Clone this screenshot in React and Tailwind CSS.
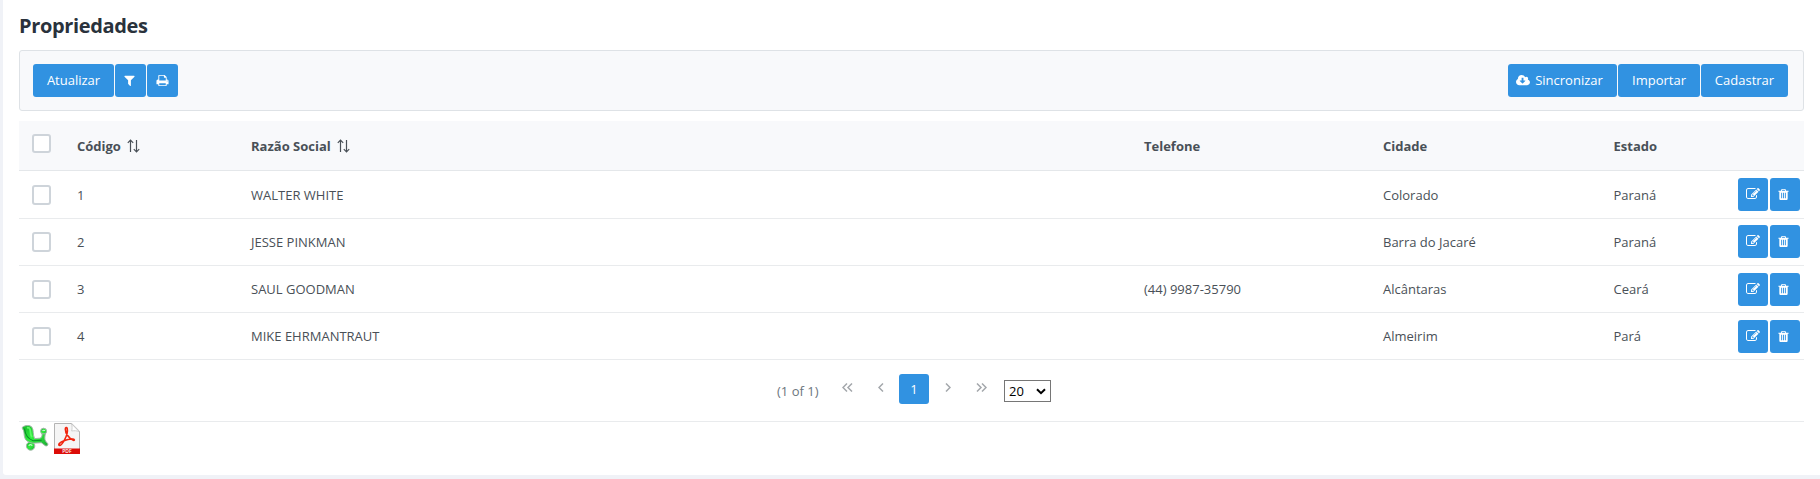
import React from "react";

const paths = {
  filter:
    "M1595 295q17 41-14 70l-493 493v742q0 42-39 59-13 5-25 5-27 0-45-19l-256-256q-19-19-19-45v-486l-493-493q-31-29-14-70 17-39 59-39h1280q42 0 59 39z",
  print:
    "M448 1536h896v-256h-896v256zm0-640h896v-384h-160q-40 0-68-28t-28-68v-160h-640v640zm1152 64q0-26-19-45t-45-19-45 19-19 45 19 45 45 19 45-19 19-45zm128 0v416q0 13-9.5 22.5t-22.5 9.5h-224v160q0 40-28 68t-68 28h-960q-40 0-68-28t-28-68v-160h-224q-13 0-22.5-9.5t-9.5-22.5v-416q0-79 56.5-135.5t135.5-56.5h64v-544q0-40 28-68t68-28h672q40 0 88 20t76 48l152 152q28 28 48 76t20 88v256h64q79 0 135.5 56.5t56.5 135.5z",
  cloud:
    "M1216 928q0-14-9-23t-23-9h-224v-352q0-13-9.5-22.5t-22.5-9.5h-192q-13 0-22.5 9.5t-9.5 22.5v352h-224q-13 0-22.5 9.5t-9.5 22.5q0 14 9 23l352 352q9 9 23 9t23-9l351-351q10-12 10-24zm640 224q0 159-112.5 271.5t-271.5 112.5h-1088q-185 0-316.5-131.5t-131.5-316.5q0-130 70-240t188-165q-2-30-2-43 0-212 150-362t362-150q156 0 285.5 87t188.5 231q71-62 166-62 106 0 181 75t75 181q0 76-41 138 130 31 213.5 135.5t83.5 238.5z",
  edit:
    "M888 1184l116-116-152-152-116 116v56h96v96h56zm440-720q-16-16-33 1l-350 350q-17 17-1 33t33-1l350-350q17-17 1-33zm80 594v190q0 119-84.5 203.5t-203.5 84.5h-832q-119 0-203.5-84.5t-84.5-203.5v-832q0-119 84.5-203.5t203.5-84.5h832q63 0 117 25 15 7 18 23 3 17-9 29l-49 49q-14 14-32 8-23-6-45-6h-832q-66 0-113 47t-47 113v832q0 66 47 113t113 47h832q66 0 113-47t47-113v-126q0-13 9-22l64-64q15-15 35-7t20 29zm-96-738l288 288-672 672h-288v-288zm444 132l-92 92-288-288 92-92q28-28 68-28t68 28l152 152q28 28 28 68t-28 68z",
  trash:
    "M704 1376v-704q0-14-9-23t-23-9h-64q-14 0-23 9t-9 23v704q0 14 9 23t23 9h64q14 0 23-9t9-23zm256 0v-704q0-14-9-23t-23-9h-64q-14 0-23 9t-9 23v704q0 14 9 23t23 9h64q14 0 23-9t9-23zm256 0v-704q0-14-9-23t-23-9h-64q-14 0-23 9t-9 23v704q0 14 9 23t23 9h64q14 0 23-9t9-23zm-544-992h448l-48-117q-7-9-17-11h-317q-10 2-17 11zm928 32v64q0 14-9 23t-23 9h-96v948q0 83-47 143.5t-113 60.5h-832q-66 0-113-58.5t-47-141.5v-952h-96q-14 0-23-9t-9-23v-64q0-14 9-23t23-9h309l70-167q15-37 54-63t79-26h320q40 0 79 26t54 63l70 167h309q14 0 23 9t9 23z",
};

function Icon({ name, viewBox = "0 0 1792 1792", className = "size-[13px]" }) {
  return (
    <svg viewBox={viewBox} className={className} fill="currentColor" aria-hidden="true">
      <path d={paths[name]} />
    </svg>
  );
}

function Button({ className = "", children }) {
  return (
    <button
      type="button"
      className={`flex h-[33px] shrink-0 items-center justify-center rounded-[3px] bg-[#3192e1] text-[13px] text-white ${className}`}
    >
      {children}
    </button>
  );
}

function Checkbox({ className = "" }) {
  return <span className={`block w-[19px] rounded-[3px] border-2 border-[#ced4da] bg-white ${className}`} />;
}

function SortIcon() {
  return (
    <svg viewBox="0 0 13 14" className="ml-[6px] h-[14px] w-[13px]" fill="none" stroke="#495057" strokeWidth="1.2" aria-hidden="true">
      <path d="M3.500 13V1M.8 3.800 3.500 1l2.700 2.800M9.500 1v12M6.800 10.200 9.500 13l2.700-2.800" />
    </svg>
  );
}

function Chevron({ d, width, className = "" }) {
  return (
    <svg viewBox={`0 0 ${width} 9`} width={width} height="9" className={className} fill="none" stroke="#a3a7ab" strokeWidth="1.5" aria-hidden="true">
      <path d={d} />
    </svg>
  );
}

const columns = "grid grid-cols-[58px_174px_893px_239px_230.5px_190.5px]";

const rows = [
  { id: "1", name: "WALTER WHITE", phone: "", city: "Colorado", state: "Paraná", row: "h-12", pad: "pt-[7px]", box: "mt-[14px] h-5", text: "pt-[15px]" },
  { id: "2", name: "JESSE PINKMAN", phone: "", city: "Barra do Jacaré", state: "Paraná", row: "h-[47px]", pad: "pt-[6px]", box: "mt-[13px] h-5", text: "pt-[14px]" },
  { id: "3", name: "SAUL GOODMAN", phone: "(44) 9987-35790", city: "Alcântaras", state: "Ceará", row: "h-[47px]", pad: "pt-[7px]", box: "mt-[14px] h-[19px]", text: "pt-[14px]" },
  { id: "4", name: "MIKE EHRMANTRAUT", phone: "", city: "Almeirim", state: "Pará", row: "h-[47px]", pad: "pt-[7px]", box: "mt-[14px] h-[19px]", text: "pt-[14px]" },
];

function ExcelIcon() {
  return (
    <svg viewBox="0 0 28 28" className="mt-px size-7" aria-hidden="true">
      <defs>
        <linearGradient id="leaf" x1="0" y1="0" x2="1" y2="1">
          <stop offset="0" stopColor="#17b52c" />
          <stop offset="0.5" stopColor="#2ff03d" />
          <stop offset="1" stopColor="#1cab35" />
        </linearGradient>
      </defs>
      <g stroke="#a3b5a8" strokeWidth="1" fill="url(#leaf)">
        <circle cx="9.600" cy="22" r="4.200" />
        <circle cx="22.600" cy="7.200" r="3" />
        <path d="M1.300 3.300C4 1 9 .8 10.900 3.200c2 2.800.7 7.200 2.700 11.400l5.200-.4c1.600-.2 2.300-1.600 2.300-4.400h3.300c-.6 3-1 5.200.2 7.300l2.200 2.600c.5 1.800-1 2.700-2.500 2l-4-3-6.500.4c-2.800.2-5-.3-7.700-2.100C2.900 14.800 3.400 10.300 2.700 7.200 2.400 5.600.9 4.700 1.300 3.300z" />
      </g>
      <path d="M3.500 4.500c.6 5.500 2.700 10.200 8.700 12.200l8.500-.4" fill="none" stroke="#0a8f28" strokeWidth="1.100" />
      <path d="M6 3.800c2-.5 3 .5 3.200 2.500.2 2.700.4 4.800 1.600 7" fill="none" stroke="#5cf963" strokeWidth="1.800" />
      <path d="M7.800 21.800c.4-1.500 2.900-1.500 3.400 0M21.700 7c.2-1 1.800-1 2 0" fill="none" stroke="#c9f5cd" strokeWidth="1.200" />
    </svg>
  );
}

function PdfIcon() {
  return (
    <svg viewBox="0 0 26 32" className="h-8 w-[26px]" aria-hidden="true">
      <path d="M.5.500h17.200l7.800 7.800v22.200H.5z" fill="#f5f5f5" stroke="#b4b4b4" />
      <path d="M17.500.800c.8 2.400.7 4.800.2 7.200 2.500-.5 5-.3 7.500.6z" fill="#fff" stroke="#c3c3c3" strokeWidth=".8" />
      <path
        d="M5.200 22.300c-1.300-.5.600-3 4.800-4.500 2.800-4.800 3.900-9.400 3.200-12.300-.4-1.400-1.900-1.100-1.900.4 0 4.200 3.500 9.700 8 11.400 1.500.5 1.400-1-.3-1.200-3-.3-6 .4-9 1.700-1.800 3-3.600 5-4.800 4.500z"
        fill="none"
        stroke="#f1250f"
        strokeWidth="1.600"
      />
      <path d="M0 25.500h26V31H0z" fill="#dc0c08" />
      <text x="13" y="30" textAnchor="middle" fontSize="5" fontWeight="600" fill="#fff" fontFamily="Open Sans, sans-serif">
        PDF
      </text>
    </svg>
  );
}

export default function App() {
  return (
    <div className="h-[479px] w-[1820px] overflow-hidden bg-[#f0f2f7] pl-[3px] font-['Open_Sans',sans-serif] text-[13px] leading-[18px] text-[#495057]">
      <main className="h-[475px] rounded-bl-[3px] bg-white pr-4 pl-4">
        <h1 className="h-[50px] pt-3 text-[20px] leading-[27px] font-bold tracking-[-0.35px] text-[#2a323c]">Propriedades</h1>

        <div className="flex h-[61px] items-start justify-between rounded-[3px] border border-[#dee2e6] bg-[#f8f9fb] pt-[13px] pr-[15px] pl-[13px]">
          <div className="flex gap-px">
            <Button className="w-[81px] pb-[2px]">Atualizar</Button>
            <Button className="w-[31px] pr-[3px]"><Icon name="filter" /></Button>
            <Button className="w-[31px] pr-px"><Icon name="print" /></Button>
          </div>
          <div className="flex gap-px">
            <Button className="w-[109px] gap-[5px] pr-[6px] pb-[2px]">
              <Icon name="cloud" viewBox="-64 0 1920 1792" className="mt-px h-[13px] w-[14px]" />
              Sincronizar
            </Button>
            <Button className="w-[82px] pb-[2px]">Importar</Button>
            <Button className="w-[87px] pb-[2px]">Cadastrar</Button>
          </div>
        </div>

        <section className="mt-[10px]">
          <div className={`${columns} h-[50px] border-b border-[#e4e7ea] bg-[#f8f9fb] font-bold`}>
            <div className="pl-[13px]"><Checkbox className="mt-[13px] h-[19px]" /></div>
            <div className="flex h-[50px] items-center">Código<SortIcon /></div>
            <div className="flex h-[50px] items-center">Razão Social<SortIcon /></div>
            <div className="flex h-[50px] items-center">Telefone</div>
            <div className="flex h-[50px] items-center">Cidade</div>
            <div className="flex h-[50px] items-center">Estado</div>
          </div>
          {rows.map((r) => (
            <div key={r.id} className={`${columns} ${r.row} border-b border-[#e9ebed]`}>
              <div className="pl-[13px]"><Checkbox className={r.box} /></div>
              <div className={r.text}>{r.id}</div>
              <div className={r.text}>{r.name}</div>
              <div className={r.text}>{r.phone}</div>
              <div className={r.text}>{r.city}</div>
              <div className="flex justify-between pr-[4px]">
                <div className={r.text}>{r.state}</div>
                <div className={`flex gap-[2px] ${r.pad}`}>
                  <Button className="w-[30px] pb-px"><Icon name="edit" className="size-[14px]" /></Button>
                  <Button className="w-[30px] pr-[3px]"><Icon name="trash" /></Button>
                </div>
              </div>
            </div>
          ))}
        </section>

        <nav className="flex h-[62px] items-start border-b border-[#e9ebed] pl-[758px]">
          <span className="w-[65px] pt-[22px] text-[#6c757d]">(1 of 1)</span>
          <Chevron width={11} d="M5 .5l-4 4 4 4M10 .5l-4 4 4 4" className="mt-[23px]" />
          <Chevron width={6} d="M5 .5l-4 4 4 4" className="mt-[23px] ml-[25px]" />
          <span className="mt-[14px] ml-[15px] flex size-[30px] items-center justify-center rounded-[3px] bg-[#3192e1] text-white">1</span>
          <Chevron width={6} d="M1 .5l4 4-4 4" className="mt-[23px] ml-4" />
          <Chevron width={11} d="M1 .5l4 4-4 4M6 .5l4 4-4 4" className="mt-[23px] ml-[25px]" />
          <span className="mt-5 ml-[17px] flex h-[22px] w-[47px] items-center justify-between border border-[#767676] pr-[4px] pl-[4px] text-black">
            20
            <svg viewBox="0 0 10 7" className="h-[7px] w-[10px]" fill="none" stroke="#000" strokeWidth="2" aria-hidden="true">
              <path d="M1 1.200l4 4 4-4" />
            </svg>
          </span>
        </nav>

        <div className="flex items-start gap-[5px] pt-px pl-[2px]">
          <ExcelIcon />
          <PdfIcon />
        </div>
      </main>
    </div>
  );
}
